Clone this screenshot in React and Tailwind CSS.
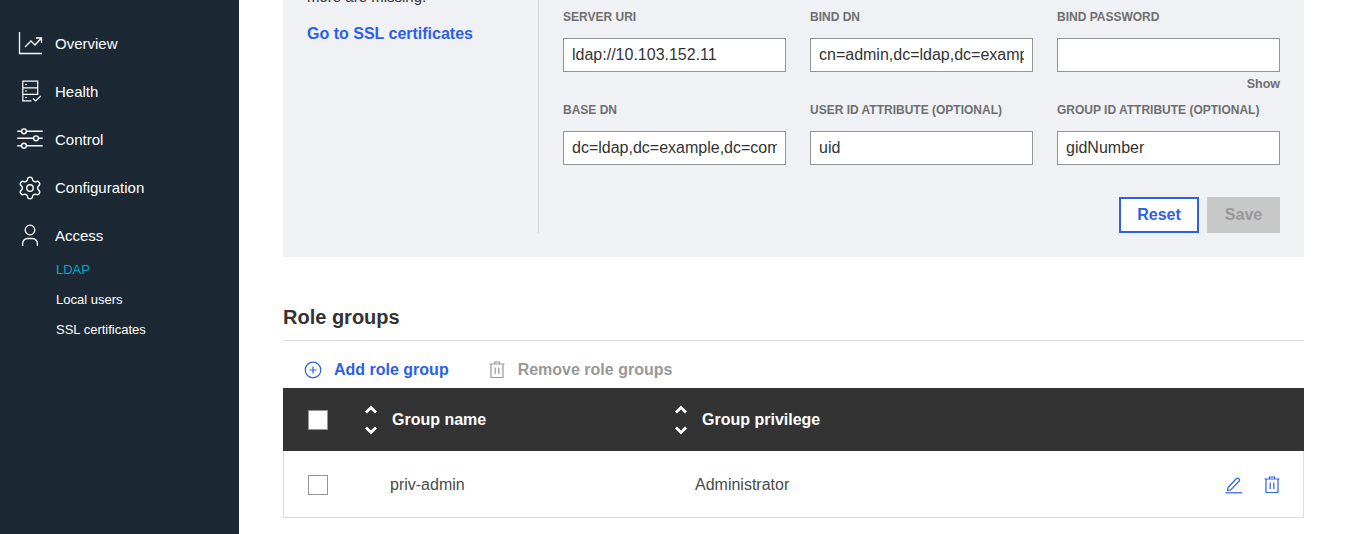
import React from "react";
import { Settings } from "lucide-react";

const FONT = "font-['Liberation_Sans',Arial,sans-serif]";

// sidebar icons, drawn in a 26x26 box
const OverviewIcon = () => (
  <svg width="26" height="26" viewBox="0 0 26 26" fill="none" stroke="#fff" strokeWidth="1.3">
    <path d="M2.5 1V22.5H25" />
    <path d="M8 16l6-6 4 4 6.5-7M19 7h5.5v5" />
  </svg>
);

const HealthIcon = () => (
  <svg width="26" height="26" viewBox="0 0 26 26" fill="none" stroke="#fff" strokeWidth="1.2">
    <path d="M20.7 16V2.2H5.8V21.8H14.5" />
    <path d="M5.8 8.8H20.7M5.8 15.3H20.7" />
    <path d="M8 5.5h2M8 12h2M8 18.5h2" />
    <path d="M16 19.5l2.6 2.5 5.2-5" />
  </svg>
);

const ControlIcon = () => (
  <svg width="26" height="26" viewBox="0 0 26 26" fill="none" stroke="#fff" strokeWidth="1.4">
    <path d="M0.3 4.3H25.7M0.3 11.3H25.7M0.3 18.7H25.7" />
    <circle cx="7" cy="4.3" r="2.4" fill="#1c2834" />
    <circle cx="19" cy="11.3" r="2.4" fill="#1c2834" />
    <circle cx="7" cy="18.7" r="2.4" fill="#1c2834" />
  </svg>
);

const AccessIcon = () => (
  <svg width="26" height="26" viewBox="0 0 26 26" fill="none" stroke="#fff" strokeWidth="1.3">
    <circle cx="13" cy="7" r="4.8" />
    <path d="M5.6 23v-2.5a5 5 0 0 1 5-5h4.8a5 5 0 0 1 5 5V23" />
  </svg>
);

const TrashIcon = ({ color }) => (
  <svg width="16" height="18" viewBox="0 0 16 18" fill="none" stroke={color} strokeWidth="1.2">
    <path d="M0.5 3H15.5M5.5 3V1H10.5V3" />
    <path d="M2 3V16.5H14V3" />
    <path d="M6.2 6.5V13M9.8 6.5V13" />
  </svg>
);

const AddIcon = () => (
  <svg width="18" height="18" viewBox="0 0 18 18" fill="none" stroke="#2d60e5" strokeWidth="1.2">
    <circle cx="9" cy="9" r="7.8" />
    <path d="M9 5.5V12.5M5.5 9H12.5" />
  </svg>
);

const EditIcon = () => (
  <svg width="18" height="18" viewBox="0 0 18 18" fill="none" stroke="#2d60e5" strokeWidth="1.2">
    <path d="M3 11.5L11.5 2.5a1.4 1.4 0 0 1 2 0l.6.5a1.4 1.4 0 0 1 .1 2L5.8 13.8 2.6 14.5Z" />
    <path d="M0.5 16.8H17.2" />
  </svg>
);

const SortIcon = () => (
  <div className="flex h-[30px] w-[18px] flex-col items-center justify-between">
    <svg width="14" height="9" viewBox="0 0 14 9" fill="none" stroke="#fff" strokeWidth="2.8">
      <path d="M2 7.5L7 2.5l5 5" />
    </svg>
    <svg width="14" height="9" viewBox="0 0 14 9" fill="none" stroke="#fff" strokeWidth="2.8">
      <path d="M2 1.5L7 6.5l5-5" />
    </svg>
  </div>
);

const navItems = [
  { label: "Overview", Icon: OverviewIcon },
  { label: "Health", Icon: HealthIcon },
  { label: "Control", Icon: ControlIcon },
  { label: "Configuration", Icon: () => <Settings size={26} color="#fff" strokeWidth={1.25} /> },
  { label: "Access", Icon: AccessIcon },
];

const subItems = [
  { label: "LDAP", active: true },
  { label: "Local users" },
  { label: "SSL certificates" },
];

const fields = [
  { label: "SERVER URI", value: "ldap://10.103.152.11" },
  { label: "BIND DN", value: "cn=admin,dc=ldap,dc=example,dc=com" },
  { label: "BIND PASSWORD", value: "", show: true },
  { label: "BASE DN", value: "dc=ldap,dc=example,dc=com" },
  { label: "USER ID ATTRIBUTE (OPTIONAL)", value: "uid" },
  { label: "GROUP ID ATTRIBUTE (OPTIONAL)", value: "gidNumber" },
];

function Field({ label, value, show }) {
  return (
    <div className="h-[93px]">
      <div className="h-[28px] text-[12px] leading-[14px] font-bold text-[#6f6f6f]">{label}</div>
      <input
        readOnly
        value={value}
        className="block h-[34px] w-full border border-[#949494] bg-white px-[8px] text-[16px] text-[#333] outline-none"
      />
      {show && <div className="mt-[5px] text-right text-[12.5px] leading-[15px] font-bold text-[#6f6f6f]">Show</div>}
    </div>
  );
}

export default function App() {
  return (
    <div className={`flex h-[534px] overflow-hidden bg-white ${FONT}`}>
      {/* SIDEBAR */}
      <div className="w-[239px] shrink-0 bg-[#1c2834] pt-[20px] text-white">
        {navItems.map(({ label, Icon }) => (
          <div key={label} className="flex h-[48px] items-center gap-[12px] pl-[17px] text-[15px]">
            <Icon />
            <span>{label}</span>
          </div>
        ))}
        <div className="-mt-[5px]">
          {subItems.map((item) => (
            <div
              key={item.label}
              className={`flex h-[30px] items-center pl-[56px] text-[13px] ${item.active ? "text-[#00a8cc]" : "text-white"}`}
            >
              {item.label}
            </div>
          ))}
        </div>
      </div>

      {/* CONTENT */}
      <div className="w-[1110px] pr-[45px] pl-[44px]">
        <div className="flex h-[257px] bg-[#f0f1f5] pr-[24px] pl-[24px]">
          <div className="w-[231px] shrink-0 overflow-hidden">
            <div className="-mt-[12px] text-[15px] leading-[18px] text-[#333]">more are missing.</div>
            <div className="mt-[18px] text-[16px] leading-[20px] font-bold text-[#2d60e5]">Go to SSL certificates</div>
          </div>
          <div className="mb-[24px] w-px shrink-0 bg-[#d5d7dc]" />
          <div className="flex-1 pt-[10px] pl-[24px]">
            <div className="grid grid-cols-3 gap-x-[24px]">
              {fields.map((f) => (
                <Field key={f.label} {...f} />
              ))}
            </div>
            <div className="mt-[1px] flex justify-end gap-[8px]">
              <button className="h-[36px] w-[80px] border-2 border-[#2d60e5] bg-white text-[16px] font-bold text-[#2d60e5]">
                Reset
              </button>
              <button className="h-[36px] w-[73px] bg-[#c8c8c8] text-[16px] font-bold text-[#989898]">Save</button>
            </div>
          </div>
        </div>

        <div className="mt-[48px] border-b border-[#dcdcdc] pb-[10px] text-[20px] leading-[25px] font-bold text-[#333]">
          Role groups
        </div>

        <div className="flex h-[47px] items-center pt-[11px] pl-[21px] text-[16px] font-bold">
          <div className="flex items-center gap-[12px] text-[#2d60e5]">
            <AddIcon />
            <span>Add role group</span>
          </div>
          <div className="ml-[40px] flex items-center gap-[13px] text-[#989898]">
            <TrashIcon color="#989898" />
            <span>Remove role groups</span>
          </div>
        </div>

        <div className="flex h-[63px] items-center bg-[#333] text-[16px] font-bold text-white">
          <div className="w-[70px] shrink-0 pl-[25px]">
            <div className="h-[20px] w-[20px] border border-[#949494] bg-white" />
          </div>
          <div className="flex w-[310px] shrink-0 items-center gap-[12px] pl-[9px]">
            <SortIcon />
            Group name
          </div>
          <div className="flex items-center gap-[12px] pl-[9px]">
            <SortIcon />
            Group privilege
          </div>
        </div>

        <div className="flex h-[67px] items-center border-x border-b border-[#dcdcdc] pt-[2px] text-[16px] text-[#4a4a4a]">
          <div className="w-[69px] shrink-0 pl-[24px]">
            <div className="h-[20px] w-[20px] border border-[#949494] bg-white" />
          </div>
          <div className="w-[310px] shrink-0 pl-[37px]">priv-admin</div>
          <div className="flex-1 pl-[32px]">Administrator</div>
          <div className="flex items-center gap-[21px] pr-[23px]">
            <EditIcon />
            <TrashIcon color="#2d60e5" />
          </div>
        </div>
      </div>
    </div>
  );
}
